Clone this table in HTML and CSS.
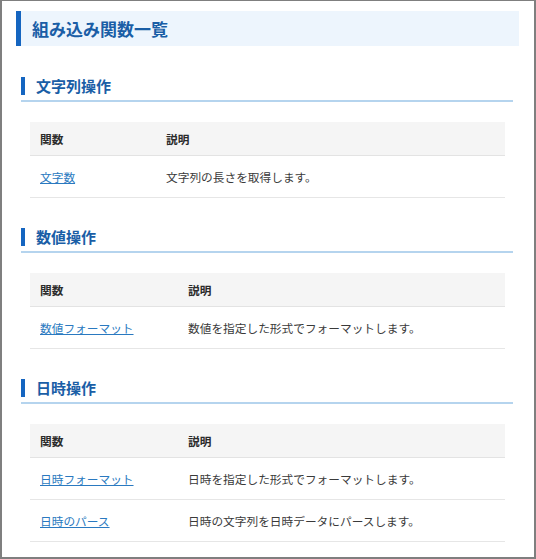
FILE: index.html
```html
<!DOCTYPE html>
<html lang="ja">
<head>
<meta charset="utf-8">
<title>組み込み関数一覧</title>
<link rel="stylesheet" href="styles.css">
</head>
<body>
<div class="frame">
  <h1 class="page-title">組み込み関数一覧</h1>

  <section class="section">
    <h2 class="section-title">文字列操作</h2>
    <table class="fn-table fn-table--short">
      <thead>
        <tr><th class="col-name">関数</th><th>説明</th></tr>
      </thead>
      <tbody>
        <tr><td><a href="#">文字数</a></td><td>文字列の長さを取得します。</td></tr>
      </tbody>
    </table>
  </section>

  <section class="section">
    <h2 class="section-title">数値操作</h2>
    <table class="fn-table">
      <thead>
        <tr><th class="col-name">関数</th><th>説明</th></tr>
      </thead>
      <tbody>
        <tr><td><a href="#">数値フォーマット</a></td><td>数値を指定した形式でフォーマットします。</td></tr>
      </tbody>
    </table>
  </section>

  <section class="section">
    <h2 class="section-title">日時操作</h2>
    <table class="fn-table">
      <thead>
        <tr><th class="col-name">関数</th><th>説明</th></tr>
      </thead>
      <tbody>
        <tr><td><a href="#">日時フォーマット</a></td><td>日時を指定した形式でフォーマットします。</td></tr>
        <tr><td><a href="#">日時のパース</a></td><td>日時の文字列を日時データにパースします。</td></tr>
      </tbody>
    </table>
  </section>
</div>
</body>
</html>
```

FILE: styles.css
```css
html, body {
  margin: 0;
  padding: 0;
  background: #ffffff;
}

body {
  font-family: "Noto Sans CJK JP", "Noto Sans", sans-serif;
  color: #333333;
}

.frame {
  box-sizing: border-box;
  width: 536px;
  height: 559px;
  border: 2px solid #7f7f7f;
  border-top-width: 1px;
  border-right-width: 2px;
  padding: 10px 15px 0 14px;
  overflow: hidden;
}

.page-title {
  margin: 0;
  height: 35px;
  display: flex;
  align-items: center;
  box-sizing: border-box;
  padding-left: 11px;
  background: #edf5fd;
  border-left: 5px solid #1565c0;
  font-size: 17px;
  font-weight: 700;
  color: #1a5ea6;
  line-height: 1;
}

.section-title {
  margin: 29px 6px 0 5px;
  padding: 0 0 3px 0;
  display: flex;
  align-items: center;
  gap: 11px;
  font-size: 15px;
  line-height: 22px;
  font-weight: 700;
  color: #1a5ea6;
  border-bottom: 2px solid #b5d4ee;
}

.section + .section .section-title {
  margin-top: 28px;
}

.section-title::before {
  content: "";
  display: block;
  width: 4px;
  height: 18px;
  background: #1565c0;
}

.fn-table {
  width: calc(100% - 28px);
  margin: 20px 14px 0 14px;
  border-collapse: collapse;
  font-size: 11.7px;
}

.fn-table th {
  background: #f5f5f5;
  font-weight: 700;
  color: #2b2b2b;
  text-align: left;
  height: 33px;
  padding: 0 10px;
  border-bottom: 1px solid #e3e3e3;
}

.fn-table td {
  height: 41px;
  padding: 0 10px;
  color: #3a3a3a;
  border-bottom: 1px solid #e6e6e6;
}

.fn-table .col-name {
  width: 128px;
}

.fn-table--short .col-name {
  width: 106px;
}

.fn-table a {
  color: #2a79c0;
  text-decoration: underline;
}
```
